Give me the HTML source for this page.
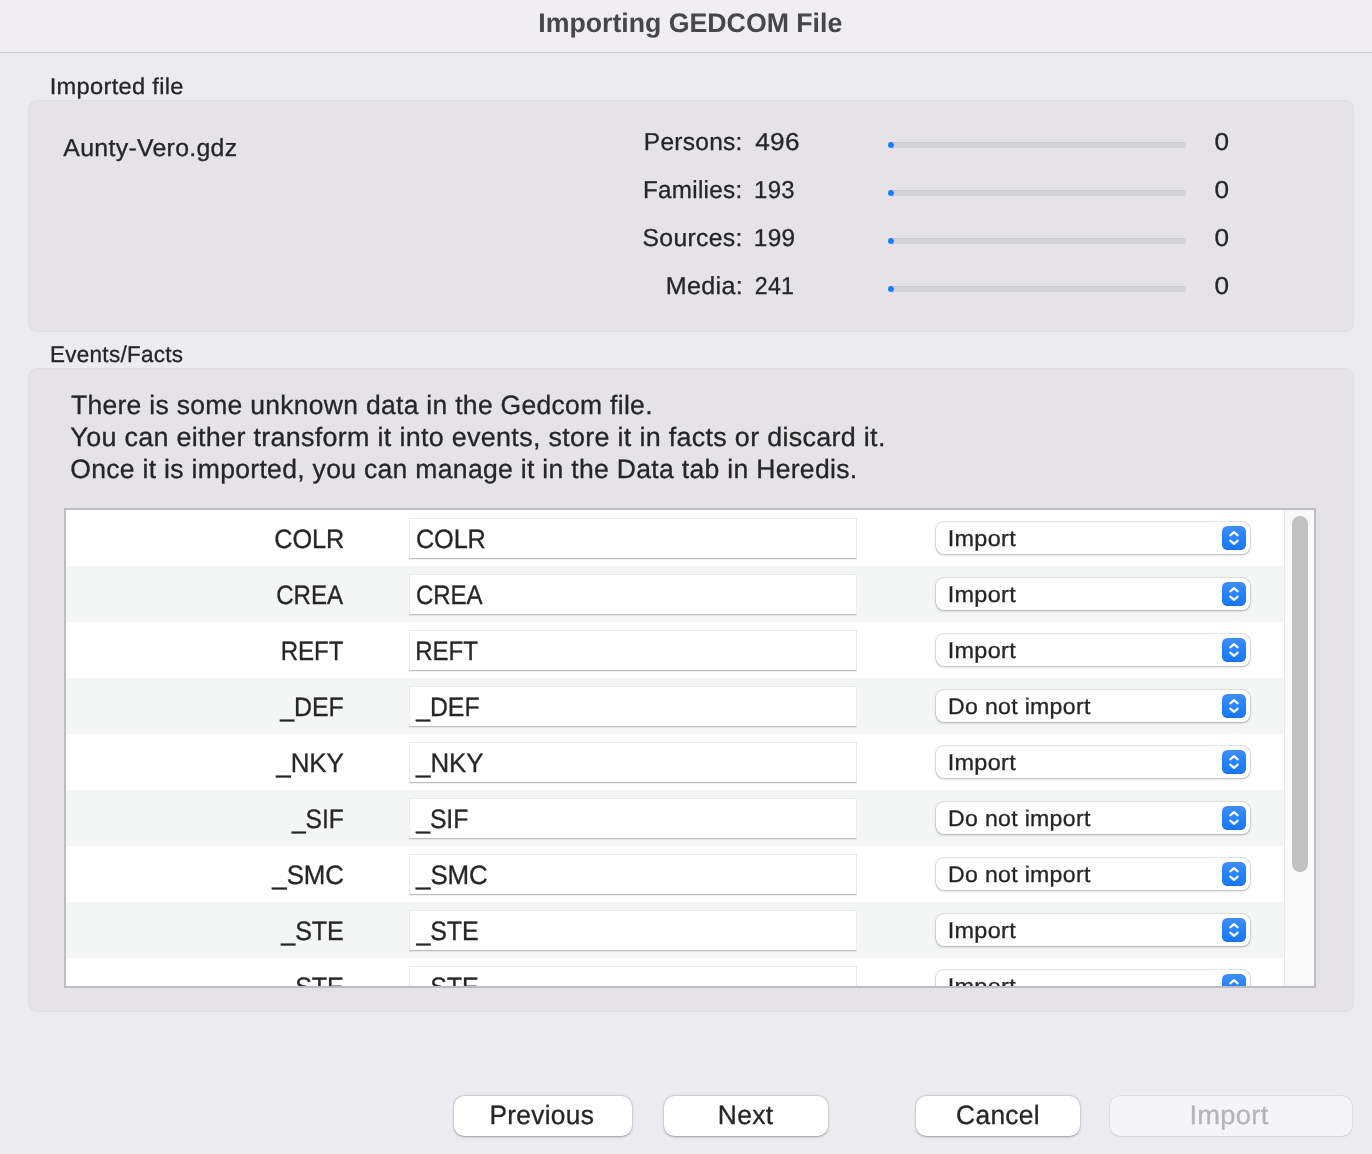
<!DOCTYPE html><html><head><meta charset="utf-8"><title>Importing GEDCOM File</title><style>
*{box-sizing:border-box;margin:0;padding:0}
html,body{width:1372px;height:1154px;overflow:hidden}
body{background:#ecebf0;font-family:"Liberation Sans",sans-serif;color:#262626;position:relative}
.abs{position:absolute;white-space:nowrap}
.t{position:absolute;left:0;top:0;white-space:nowrap;line-height:40px;transform-origin:0 0;-webkit-text-stroke:0.3px currentColor;text-rendering:geometricPrecision}
.txt{position:absolute;left:0;top:0;width:1372px;height:1154px;will-change:transform}
.titlebar{left:0;top:0;width:1372px;height:52px;background:#f0eef3}
.tline{left:0;top:52px;width:1372px;height:1px;background:#cbcace}
.gbox{background:#e5e3e8;border:1px solid #dfdde2;border-radius:9px}
.bar{height:6px;border-radius:3px;background:#d4d3d7;box-shadow:inset 0 .5px .5px rgba(0,0,0,.06)}
.dot{width:6.5px;height:6.5px;border-radius:50%;background:#1b80fa}
.table{left:64px;top:508px;width:1252px;height:480px;border:2px solid #bdbdbf;background:#fff;overflow:hidden}
.row{left:0;width:1218px;height:56px}
.row.alt{background:#f4f5f5}
.inp{left:343px;top:8px;width:448px;height:41px;background:#fff;border:1px solid #ebebeb;border-bottom:1px solid #bbb;box-shadow:0 1px 0 rgba(0,0,0,.05)}
.sel{left:870px;top:12px;width:314px;height:32px;background:#fff;border-radius:7.5px;box-shadow:0 0 0 .5px rgba(0,0,0,.13),0 1px 2.5px rgba(0,0,0,.24),0 0 2px rgba(0,0,0,.07)}
.sel i{position:absolute;right:4px;top:4px;width:24px;height:24px;border-radius:5.5px;background:linear-gradient(#3b8ff9,#1675f6)}
.sel svg{position:absolute;left:0;top:0}
.sbtrack{left:1218px;top:0;width:30px;height:476px;background:#fafafa;border-left:1px solid #e8e8e8}
.sbthumb{left:1226px;top:6px;width:16px;height:356px;border-radius:8px;background:#c1c1c1}
.btn{top:1096px;height:40px;border-radius:10px;background:#fff;box-shadow:0 0 0 .5px rgba(0,0,0,.12),0 .5px 3px rgba(0,0,0,.2),0 1px 1px rgba(0,0,0,.1)}
.btn.dis{background:#f5f4f8;box-shadow:0 0 0 .5px rgba(0,0,0,.07),0 .5px 2px rgba(0,0,0,.08)}
.clip{left:66px;top:510px;width:1248px;height:476px;overflow:hidden}
.clip .in{position:absolute;left:-66px;top:-510px;width:1372px;height:1154px}
</style></head><body>
<div class="abs titlebar"></div><div class="abs tline"></div>
<div class="abs gbox" style="left:28px;top:100px;width:1326px;height:232px"></div>
<div class="abs bar" style="left:888px;top:142px;width:298px"></div>
<div class="abs dot" style="left:887.75px;top:141.75px"></div>
<div class="abs bar" style="left:888px;top:190px;width:298px"></div>
<div class="abs dot" style="left:887.75px;top:189.75px"></div>
<div class="abs bar" style="left:888px;top:238px;width:298px"></div>
<div class="abs dot" style="left:887.75px;top:237.75px"></div>
<div class="abs bar" style="left:888px;top:286px;width:298px"></div>
<div class="abs dot" style="left:887.75px;top:285.75px"></div>
<div class="abs gbox" style="left:28px;top:368px;width:1326px;height:644px"></div>
<div class="abs table">
<div class="abs row" style="top:0px"><div class="abs inp"></div><div class="abs sel"><i><svg width="24" height="24" viewBox="0 0 24 24"><path d="M8.3 9.4L12 6.2l3.7 3.2M8.3 14.6L12 17.8l3.7-3.2" fill="none" stroke="#fff" stroke-width="2.2" stroke-linecap="round" stroke-linejoin="round"/></svg></i></div></div>
<div class="abs row alt" style="top:56px"><div class="abs inp"></div><div class="abs sel"><i><svg width="24" height="24" viewBox="0 0 24 24"><path d="M8.3 9.4L12 6.2l3.7 3.2M8.3 14.6L12 17.8l3.7-3.2" fill="none" stroke="#fff" stroke-width="2.2" stroke-linecap="round" stroke-linejoin="round"/></svg></i></div></div>
<div class="abs row" style="top:112px"><div class="abs inp"></div><div class="abs sel"><i><svg width="24" height="24" viewBox="0 0 24 24"><path d="M8.3 9.4L12 6.2l3.7 3.2M8.3 14.6L12 17.8l3.7-3.2" fill="none" stroke="#fff" stroke-width="2.2" stroke-linecap="round" stroke-linejoin="round"/></svg></i></div></div>
<div class="abs row alt" style="top:168px"><div class="abs inp"></div><div class="abs sel"><i><svg width="24" height="24" viewBox="0 0 24 24"><path d="M8.3 9.4L12 6.2l3.7 3.2M8.3 14.6L12 17.8l3.7-3.2" fill="none" stroke="#fff" stroke-width="2.2" stroke-linecap="round" stroke-linejoin="round"/></svg></i></div></div>
<div class="abs row" style="top:224px"><div class="abs inp"></div><div class="abs sel"><i><svg width="24" height="24" viewBox="0 0 24 24"><path d="M8.3 9.4L12 6.2l3.7 3.2M8.3 14.6L12 17.8l3.7-3.2" fill="none" stroke="#fff" stroke-width="2.2" stroke-linecap="round" stroke-linejoin="round"/></svg></i></div></div>
<div class="abs row alt" style="top:280px"><div class="abs inp"></div><div class="abs sel"><i><svg width="24" height="24" viewBox="0 0 24 24"><path d="M8.3 9.4L12 6.2l3.7 3.2M8.3 14.6L12 17.8l3.7-3.2" fill="none" stroke="#fff" stroke-width="2.2" stroke-linecap="round" stroke-linejoin="round"/></svg></i></div></div>
<div class="abs row" style="top:336px"><div class="abs inp"></div><div class="abs sel"><i><svg width="24" height="24" viewBox="0 0 24 24"><path d="M8.3 9.4L12 6.2l3.7 3.2M8.3 14.6L12 17.8l3.7-3.2" fill="none" stroke="#fff" stroke-width="2.2" stroke-linecap="round" stroke-linejoin="round"/></svg></i></div></div>
<div class="abs row alt" style="top:392px"><div class="abs inp"></div><div class="abs sel"><i><svg width="24" height="24" viewBox="0 0 24 24"><path d="M8.3 9.4L12 6.2l3.7 3.2M8.3 14.6L12 17.8l3.7-3.2" fill="none" stroke="#fff" stroke-width="2.2" stroke-linecap="round" stroke-linejoin="round"/></svg></i></div></div>
<div class="abs row" style="top:448px"><div class="abs inp"></div><div class="abs sel"><i><svg width="24" height="24" viewBox="0 0 24 24"><path d="M8.3 9.4L12 6.2l3.7 3.2M8.3 14.6L12 17.8l3.7-3.2" fill="none" stroke="#fff" stroke-width="2.2" stroke-linecap="round" stroke-linejoin="round"/></svg></i></div></div>
<div class="abs sbtrack"></div><div class="abs sbthumb"></div>
</div>
<div class="abs btn" style="left:454px;width:178px"></div>
<div class="abs btn" style="left:664px;width:164px"></div>
<div class="abs btn" style="left:916px;width:164px"></div>
<div class="abs btn dis" style="left:1110px;width:242px"></div>
<div class="txt">
<div class="t" style="font-size:26.9px;letter-spacing:0.00px;transform:translate(538.26px,2.90px) scaleX(0.9928);font-weight:bold;-webkit-text-stroke:0;color:#47474a">Importing GEDCOM File</div>
<div class="t" style="font-size:22.75px;letter-spacing:0.30px;transform:translate(49.65px,66.00px) scaleX(1.0392)">Imported file</div>
<div class="t" style="font-size:22.75px;letter-spacing:0.30px;transform:translate(49.93px,334.00px) scaleX(0.9879)">Events/Facts</div>
<div class="t" style="font-size:24.5px;letter-spacing:0.30px;transform:translate(63.36px,128.80px) scaleX(1.0137)">Aunty-Vero.gdz</div>
<div class="t" style="font-size:24.5px;letter-spacing:0.30px;transform:translate(643.82px,122.90px) scaleX(0.9979)">Persons:</div>
<div class="t" style="font-size:24.5px;letter-spacing:0.30px;transform:translate(755.20px,122.90px) scaleX(1.0705)">496</div>
<div class="t" style="font-size:24.5px;letter-spacing:0.30px;transform:translate(1214.47px,122.90px) scaleX(1.0662)">0</div>
<div class="t" style="font-size:24.5px;letter-spacing:0.30px;transform:translate(642.92px,170.90px) scaleX(0.9886)">Families:</div>
<div class="t" style="font-size:24.5px;letter-spacing:0.30px;transform:translate(754.03px,170.90px) scaleX(0.9779)">193</div>
<div class="t" style="font-size:24.5px;letter-spacing:0.30px;transform:translate(1214.47px,170.90px) scaleX(1.0662)">0</div>
<div class="t" style="font-size:24.5px;letter-spacing:0.30px;transform:translate(642.52px,218.80px) scaleX(1.0099)">Sources:</div>
<div class="t" style="font-size:24.5px;letter-spacing:0.30px;transform:translate(753.86px,218.80px) scaleX(0.9935)">199</div>
<div class="t" style="font-size:24.5px;letter-spacing:0.30px;transform:translate(1214.47px,218.80px) scaleX(1.0662)">0</div>
<div class="t" style="font-size:24.5px;letter-spacing:0.30px;transform:translate(665.78px,266.80px) scaleX(1.0245)">Media:</div>
<div class="t" style="font-size:24.5px;letter-spacing:0.30px;transform:translate(754.71px,266.80px) scaleX(0.9480)">241</div>
<div class="t" style="font-size:24.5px;letter-spacing:0.30px;transform:translate(1214.47px,266.80px) scaleX(1.0662)">0</div>
<div class="t" style="font-size:26.5px;letter-spacing:0.30px;transform:translate(70.94px,384.80px) scaleX(0.9991)">There is some unknown data in the Gedcom file.</div>
<div class="t" style="font-size:26.5px;letter-spacing:0.30px;transform:translate(70.35px,416.60px) scaleX(1.0153)">You can either transform it into events, store it in facts or discard it.</div>
<div class="t" style="font-size:26.5px;letter-spacing:0.30px;transform:translate(70.19px,448.60px) scaleX(1.0019)">Once it is imported, you can manage it in the Data tab in Heredis.</div>
<div class="t" style="font-size:26.5px;letter-spacing:0.30px;transform:translate(489.47px,1094.80px) scaleX(0.9919)">Previous</div>
<div class="t" style="font-size:26.5px;letter-spacing:0.30px;transform:translate(717.83px,1094.80px) scaleX(0.9958)">Next</div>
<div class="t" style="font-size:26.5px;letter-spacing:0.30px;transform:translate(956.09px,1094.80px) scaleX(0.9946)">Cancel</div>
<div class="t" style="font-size:26.5px;letter-spacing:0.30px;transform:translate(1189.38px,1094.80px) scaleX(1.0311);color:#b5b4b8">Import</div>
<div class="abs clip"><div class="in">
<div class="t" style="font-size:26.5px;letter-spacing:-0.10px;transform:translate(274.23px,518.80px) scaleX(0.9547)">COLR</div>
<div class="t" style="font-size:26.5px;letter-spacing:-0.10px;transform:translate(415.93px,518.80px) scaleX(0.9539)">COLR</div>
<div class="t" style="font-size:22.5px;letter-spacing:0.30px;transform:translate(947.72px,518.90px) scaleX(1.0411)">Import</div>
<div class="t" style="font-size:26.5px;letter-spacing:-0.10px;transform:translate(276.28px,574.80px) scaleX(0.9096)">CREA</div>
<div class="t" style="font-size:26.5px;letter-spacing:-0.10px;transform:translate(415.93px,574.80px) scaleX(0.9089)">CREA</div>
<div class="t" style="font-size:22.5px;letter-spacing:0.30px;transform:translate(947.72px,574.90px) scaleX(1.0411)">Import</div>
<div class="t" style="font-size:26.5px;letter-spacing:-0.10px;transform:translate(280.73px,630.80px) scaleX(0.9092)">REFT</div>
<div class="t" style="font-size:26.5px;letter-spacing:-0.10px;transform:translate(415.23px,630.80px) scaleX(0.9098)">REFT</div>
<div class="t" style="font-size:22.5px;letter-spacing:0.30px;transform:translate(947.72px,630.90px) scaleX(1.0411)">Import</div>
<div class="t" style="font-size:26.5px;letter-spacing:-0.10px;transform:translate(280.25px,686.80px) scaleX(0.9412)">_DEF</div>
<div class="t" style="font-size:26.5px;letter-spacing:-0.10px;transform:translate(416.23px,686.80px) scaleX(0.9394)">_DEF</div>
<div class="t" style="font-size:22.5px;letter-spacing:0.30px;transform:translate(948.06px,686.90px) scaleX(1.0260)">Do not import</div>
<div class="t" style="font-size:26.5px;letter-spacing:-0.10px;transform:translate(276.34px,742.80px) scaleX(0.9784)">_NKY</div>
<div class="t" style="font-size:26.5px;letter-spacing:-0.10px;transform:translate(416.10px,742.80px) scaleX(0.9769)">_NKY</div>
<div class="t" style="font-size:22.5px;letter-spacing:0.30px;transform:translate(947.72px,742.90px) scaleX(1.0411)">Import</div>
<div class="t" style="font-size:26.5px;letter-spacing:-0.10px;transform:translate(291.93px,798.80px) scaleX(0.9308)">_SIF</div>
<div class="t" style="font-size:26.5px;letter-spacing:-0.10px;transform:translate(416.21px,798.80px) scaleX(0.9357)">_SIF</div>
<div class="t" style="font-size:22.5px;letter-spacing:0.30px;transform:translate(948.06px,798.90px) scaleX(1.0260)">Do not import</div>
<div class="t" style="font-size:26.5px;letter-spacing:-0.10px;transform:translate(272.34px,854.80px) scaleX(0.9767)">_SMC</div>
<div class="t" style="font-size:26.5px;letter-spacing:-0.10px;transform:translate(416.10px,854.80px) scaleX(0.9782)">_SMC</div>
<div class="t" style="font-size:22.5px;letter-spacing:0.30px;transform:translate(948.06px,854.90px) scaleX(1.0260)">Do not import</div>
<div class="t" style="font-size:26.5px;letter-spacing:-0.10px;transform:translate(281.27px,910.80px) scaleX(0.9486)">_STE</div>
<div class="t" style="font-size:26.5px;letter-spacing:-0.10px;transform:translate(416.48px,910.80px) scaleX(0.9432)">_STE</div>
<div class="t" style="font-size:22.5px;letter-spacing:0.30px;transform:translate(947.72px,910.90px) scaleX(1.0411)">Import</div>
<div class="t" style="font-size:26.5px;letter-spacing:-0.10px;transform:translate(281.27px,966.80px) scaleX(0.9486)">_STE</div>
<div class="t" style="font-size:26.5px;letter-spacing:-0.10px;transform:translate(416.48px,966.80px) scaleX(0.9432)">_STE</div>
<div class="t" style="font-size:22.5px;letter-spacing:0.30px;transform:translate(947.72px,966.90px) scaleX(1.0411)">Import</div>
</div></div>
</div>
</body></html>
